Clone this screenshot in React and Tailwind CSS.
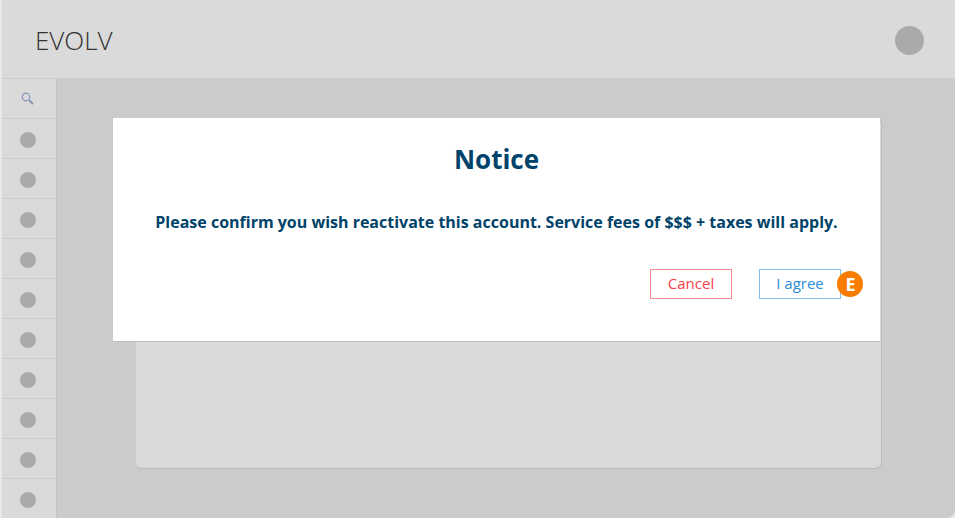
const rows = [1, 2, 3, 4, 5, 6, 7, 8, 9, 10];

const App = () => {
  return (
    <div className="h-[518px] w-[955px] overflow-hidden bg-[#e8e8e8] font-['Open_Sans',sans-serif]">
      <div className="ml-0.5 flex h-full flex-col overflow-hidden rounded-br-lg bg-[#cbcbcb]">
        <header className="flex h-[78px] shrink-0 items-center justify-between bg-[#dadada] pl-[33px] pr-[31px] pt-0.5">
          <span className="text-[26px] font-light text-[#333]">EVOLV</span>
          <div className="h-[29px] w-[29px] rounded-full bg-[#aaaaaa]" />
        </header>
        <div className="relative flex flex-1">
          <nav className="w-[55px] shrink-0 border-r border-[#c2c2c2] bg-[#dadada]">
            <div className="flex h-[41px] items-center justify-center border-y border-[#cdcdcd] pr-0.5">
              <svg width="13" height="13" viewBox="0 0 13 13" fill="none" className="-ml-px text-[#8494b5]">
                <circle cx="5" cy="5" r="3.8" stroke="currentColor" strokeWidth="1.2" />
                <path d="M8 8l4 4" stroke="currentColor" strokeWidth="1.8" />
              </svg>
            </div>
            {rows.map((r) => (
              <div key={r} className="flex h-10 items-center justify-center border-b border-[#cdcdcd] pr-0.5 pt-0.5">
                <div className="h-4 w-4 rounded-full bg-[#aaaaaa]" />
              </div>
            ))}
          </nav>
          <main className="flex-1 pl-[79px] pr-[74px] pt-[40px]">
            <div className="h-[351px] rounded-md border-b border-[#b9b9b9] bg-[#dadada] shadow-[1px_0_0_#bdbdbd]" />
          </main>
          <div className="absolute left-[111px] top-10 flex h-[224px] w-[767px] flex-col border-b border-[#bdbdbd] bg-white">
            <h1 className="mt-[23px] text-center text-[26px] font-bold leading-[36px] text-[#00436a]">Notice</h1>
            <p className="mt-[35px] text-center text-base font-bold leading-5 text-[#00436a]">
              Please confirm you wish reactivate this account. Service fees of $$$ + taxes will apply.
            </p>
            <div className="mt-[37px] flex justify-end gap-[27px] pr-[39px]">
              <button className="h-[30px] w-[82px] border border-[#ff8a91] pb-0.5 text-[15px] text-[#f8404b]">Cancel</button>
              <div className="relative">
                <button className="h-[30px] w-[82px] border border-[#86bde8] pb-0.5 text-[15px] text-[#2b8bd9]">I agree</button>
                <span className="absolute -right-[22px] top-[2px] flex h-[26px] w-[26px] items-center justify-center rounded-full bg-[#f97b00] pl-px text-lg font-bold text-white">
                  E
                </span>
              </div>
            </div>
          </div>
        </div>
      </div>
    </div>
  );
};

export default App;
